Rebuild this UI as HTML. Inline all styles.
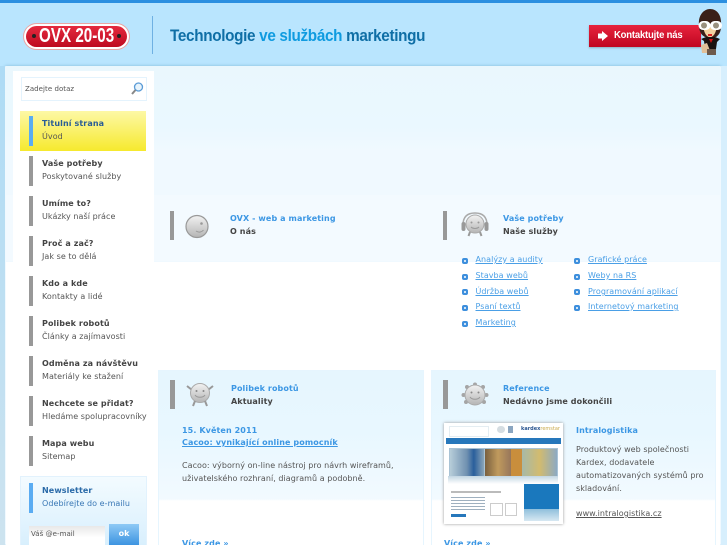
<!DOCTYPE html>
<html><head><meta charset="utf-8">
<style>
html,body{margin:0;padding:0}
body{width:727px;height:545px;overflow:hidden;position:relative;background:#b9e5fe;font-family:"DejaVu Sans",sans-serif;font-size:8px;color:#555}
div,a,span,svg{position:absolute;white-space:nowrap;display:block}
#w{left:0;top:0;width:727px;height:545px;overflow:hidden;filter:blur(.3px)}
.t{line-height:12px;letter-spacing:.05px;margin-top:1px}
.b{font-weight:bold;color:#444;letter-spacing:.1px}
.bl{color:#3c97e4}
a{color:#4a9fe6;text-decoration:underline}
.bar{width:4px;background:#989898}
.sq{width:6px;height:6px;background:#3d8fdd;border-radius:2px;margin-top:.5px}
.sq:after{content:"";position:absolute;left:2px;top:2px;width:2px;height:2px;background:#fff;border-radius:1px}
</style></head><body><div id="w">
<div style="left:0;top:0;width:727px;height:3px;background:#2b8fe0"></div>

<div style="left:24px;top:24px;width:105px;height:25px;border-radius:13px;background:#fff;box-shadow:0 0 0 1px #e9a5a5"></div>
<div style="left:26px;top:26px;width:101px;height:21px;border-radius:11px;background:linear-gradient(#e42a3e,#bd0a20)"></div>
<div style="left:32px;top:34px;width:4px;height:4px;border-radius:2px;background:#222"></div>
<div style="left:117px;top:34px;width:4px;height:4px;border-radius:2px;background:#222"></div>
<div style="left:39px;top:24px;font:bold 20px/25px 'Liberation Sans',sans-serif;color:#fff;transform:scaleX(.76);transform-origin:0 50%">OVX 20-03</div>
<div style="left:152px;top:16px;width:1px;height:38px;background:#6fb1e3"></div>
<div style="left:170px;top:25px;font:bold 16.6px/21px 'Liberation Sans',sans-serif;letter-spacing:-.35px;color:#0f6fa6;transform:scaleX(.92);transform-origin:0 50%">Technologie <span style="position:static;display:inline;color:#0f9be0">ve službách</span> marketingu</div>

<div style="left:589px;top:25px;width:112px;height:22px;background:linear-gradient(#e7233d,#bf0520);box-shadow:0 1px 2px rgba(0,0,0,.25)"></div>
<svg style="left:597px;top:30px" width="12" height="12" viewBox="0 0 12 12"><path d="M1 3.500H5V1L11 6L5 11V8.500H1Z" fill="#fff"/></svg>
<div style="left:613.500px;top:29px;font:bold 10px/13px 'Liberation Sans',sans-serif;color:#fff;letter-spacing:-.2px;transform:scaleX(.95);transform-origin:0 50%">Kontaktujte nás</div>
<svg style="left:695px;top:8px" width="30" height="48" viewBox="0 0 30 48">
<path d="M4 17C3 7 9 1 15 1C22 1 27 7 26 18C26 24 24 27 21 29H10C6 27 4 23 4 17Z" fill="#3a2018"/>
<path d="M8 18C10 33 20 33 22 18Z" fill="#f3d2a0"/>
<rect x="3.500" y="13" width="12" height="9" rx="4.500" fill="#fff"/><rect x="15" y="13" width="12" height="9" rx="4.500" fill="#fff"/>
<circle cx="9" cy="17.500" r="3" fill="#9a917f"/><circle cx="21" cy="17.500" r="3" fill="#9a917f"/>
<path d="M13 26h4v2h-4z" fill="#d22"/>
<path d="M9 33L6 31L11 29H20L25 31L22 34L21 41H10Z" fill="#1a1210"/>
<path d="M14 31h4l-2 4z" fill="#c11"/>
<path d="M6 37L12 35L16 45H7Z" fill="#e0c09a"/>
<path d="M12 41h9v6h-9z" fill="#6d5a4c"/>
</svg>

<div style="left:5px;top:66px;width:716px;height:479px;background:linear-gradient(#eaf7fd,#eaf8ff 60px,#f0f9ff 85px);box-shadow:0 0 3px #7fb9d8;border-radius:1px"></div>
<div style="left:6px;top:195px;width:714px;height:66px;background:#f3faff"></div>
<div style="left:6px;top:261px;width:714px;height:284px;background:#fff;border-top:1px solid #f0f9ff"></div>
<div style="left:0;top:66px;width:5px;height:479px;background:linear-gradient(#aedbf5,#cde3ef)"></div>
<div style="left:721px;top:66px;width:6px;height:479px;background:#d7effd"></div>

<div style="left:13px;top:71px;width:141px;height:474px;background:#fff"></div>

<div style="left:21px;top:77px;width:124px;height:22px;border:1.500px solid #e4f3fd;background:#fff"></div>
<div class="t" style="left:25px;top:82px;font-size:7px;color:#555">Zadejte dotaz</div>
<svg style="left:130px;top:81px" width="14" height="15" viewBox="0 0 14 15"><circle cx="8.500" cy="6" r="4" fill="#e8f4fc" stroke="#5a9bd6" stroke-width="1.300"/><path d="M5.500 9L2 13" stroke="#888" stroke-width="2"/></svg>

<div style="left:20px;top:111px;width:126px;height:40px;background:linear-gradient(#fdf8a6,#f6e92e)"></div>
<div class="bar" style="left:29px;top:116px;height:30px;background:#5aacf2"></div>
<div class="t b" style="left:42px;top:117px;color:#2a5d95">Titulní strana</div>
<div class="t" style="left:42px;top:130px">Úvod</div>

<div class="bar" style="left:29px;top:156px;height:30px"></div>
<div class="t b" style="left:42px;top:157px">Vaše potřeby</div>
<div class="t" style="left:42px;top:170px">Poskytované služby</div>
<div class="bar" style="left:29px;top:196px;height:30px"></div>
<div class="t b" style="left:42px;top:197px">Umíme to?</div>
<div class="t" style="left:42px;top:210px">Ukázky naší práce</div>
<div class="bar" style="left:29px;top:236px;height:30px"></div>
<div class="t b" style="left:42px;top:237px">Proč a zač?</div>
<div class="t" style="left:42px;top:250px">Jak se to dělá</div>
<div class="bar" style="left:29px;top:276px;height:30px"></div>
<div class="t b" style="left:42px;top:277px">Kdo a kde</div>
<div class="t" style="left:42px;top:290px">Kontakty a lidé</div>
<div class="bar" style="left:29px;top:316px;height:30px"></div>
<div class="t b" style="left:42px;top:317px">Polibek robotů</div>
<div class="t" style="left:42px;top:330px">Články a zajímavosti</div>
<div class="bar" style="left:29px;top:356px;height:30px"></div>
<div class="t b" style="left:42px;top:357px">Odměna za návštěvu</div>
<div class="t" style="left:42px;top:370px">Materiály ke stažení</div>
<div class="bar" style="left:29px;top:396px;height:30px"></div>
<div class="t b" style="left:42px;top:397px">Nechcete se přidat?</div>
<div class="t" style="left:42px;top:410px">Hledáme spolupracovníky</div>
<div class="bar" style="left:29px;top:436px;height:30px"></div>
<div class="t b" style="left:42px;top:437px">Mapa webu</div>
<div class="t" style="left:42px;top:450px">Sitemap</div>

<div style="left:21px;top:477px;width:125px;height:68px;background:linear-gradient(#f3fbff,#d8effd);box-shadow:0 0 0 1px #e2f2fd"></div>
<div class="bar" style="left:29px;top:483px;height:30px;background:#5aacf2"></div>
<div class="t b" style="left:42px;top:484px;color:#2a6aa8">Newsletter</div>
<div class="t" style="left:42px;top:497px;color:#3a78b5">Odebírejte do e-mailu</div>
<div style="left:29px;top:526px;width:76px;height:19px;background:linear-gradient(#e8e8e8,#fff 60%)"></div>
<div class="t" style="left:31px;top:527px;font-size:7px;color:#555">Váš @e-mail</div>
<div style="left:109px;top:524px;width:30px;height:21px;background:linear-gradient(#8fcaf5,#3d94e0);color:#fff;font-weight:bold;text-align:center;line-height:20px;font-size:8px">ok</div>

<div class="bar" style="left:170px;top:211px;height:29px"></div>
<svg style="left:184px;top:214px" width="26" height="26" viewBox="0 0 26 26"><defs><linearGradient id="g" x1="0" y1="0" x2="0" y2="1"><stop offset="0" stop-color="#f2f2f2"/><stop offset="1" stop-color="#b5b5b5"/></linearGradient></defs><circle cx="13" cy="12.500" r="11" fill="url(#g)" stroke="#999" stroke-width="1.200"/><circle cx="17.500" cy="9.500" r="1.300" fill="#999"/><path d="M12 17C15 19 18 18 19.500 16" fill="none" stroke="#999"/></svg>
<div class="t b bl" style="left:230px;top:212px">OVX - web a marketing</div>
<div class="t b" style="left:230px;top:225px">O nás</div>

<div class="bar" style="left:443px;top:211px;height:29px"></div>
<svg style="left:460px;top:211px" width="30" height="26" viewBox="0 0 30 26"><path d="M3 14C3 5 8 2 15 2C22 2 27 5 27 14" fill="none" stroke="#aaa" stroke-width="1.500"/><rect x="1.500" y="11" width="4" height="9" rx="2" fill="#999"/><rect x="24.500" y="11" width="4" height="9" rx="2" fill="#999"/><circle cx="15" cy="13" r="9" fill="url(#g)" stroke="#aaa"/><path d="M10 21L8.500 25M20 21L21.500 25" stroke="#999" stroke-width="2"/><circle cx="11.500" cy="11.500" r="1" fill="#999"/><circle cx="18.500" cy="11.500" r="1" fill="#999"/><path d="M11 16C13 18 17 18 19 16" fill="none" stroke="#999"/></svg>
<div class="t b bl" style="left:503px;top:212px">Vaše potřeby</div>
<div class="t b" style="left:503px;top:225px">Naše služby</div>

<div class="sq" style="left:462px;top:257px"></div><a class="t" style="left:475.500px;top:253px">Analýzy a audity</a>
<div class="sq" style="left:462px;top:273px"></div><a class="t" style="left:475.500px;top:269px">Stavba webů</a>
<div class="sq" style="left:462px;top:288px"></div><a class="t" style="left:475.500px;top:285px">Údržba webů</a>
<div class="sq" style="left:462px;top:304px"></div><a class="t" style="left:475.500px;top:300px">Psaní textů</a>
<div class="sq" style="left:462px;top:320px"></div><a class="t" style="left:475.500px;top:316px">Marketing</a>
<div class="sq" style="left:574px;top:257px"></div><a class="t" style="left:588px;top:253px">Grafické práce</a>
<div class="sq" style="left:574px;top:273px"></div><a class="t" style="left:588px;top:269px">Weby na RS</a>
<div class="sq" style="left:574px;top:288px"></div><a class="t" style="left:588px;top:285px">Programování aplikací</a>
<div class="sq" style="left:574px;top:304px"></div><a class="t" style="left:588px;top:300px">Internetový marketing</a>

<div style="left:159px;top:371px;width:264px;height:174px;background:linear-gradient(#e6f6fe,#e8f7ff 60px,#f2faff 128px,#fff 130px);box-shadow:0 0 0 1px #e6f5fe"></div>
<div class="bar" style="left:170px;top:380px;width:5px;height:29px"></div>
<svg style="left:185px;top:382px" width="30" height="26" viewBox="0 0 30 26"><path d="M7 8L2 4M23 8L28 4" stroke="#999" stroke-width="2"/><circle cx="15" cy="11" r="9.500" fill="url(#g)" stroke="#aaa"/><path d="M10 19L8 24M20 19L22 24" stroke="#999" stroke-width="2"/><circle cx="11.500" cy="9" r="1" fill="#888"/><circle cx="18.500" cy="9" r="1" fill="#888"/><path d="M10 13C12 16 18 16 20 13" fill="none" stroke="#999"/></svg>
<div class="t b bl" style="left:231px;top:382px">Polibek robotů</div>
<div class="t b" style="left:231px;top:395px">Aktuality</div>
<div class="t b bl" style="left:182px;top:424px">15. Květen 2011</div>
<a class="t b" style="left:182px;top:436px;color:#3c97e4">Cacoo: vynikající online pomocník</a>
<div class="t" style="left:182px;top:459px;width:230px">Cacoo: výborný on-line nástroj pro návrh wireframů,</div>
<div class="t" style="left:182px;top:472px;width:230px">uživatelského rozhraní, diagramů a podobně.</div>
<div class="t b bl" style="left:182px;top:537px">Více zde »</div>

<div style="left:432px;top:371px;width:283px;height:174px;background:linear-gradient(#e6f6fe,#e8f7ff 60px,#f2faff 128px,#fff 130px);box-shadow:0 0 0 1px #e6f5fe"></div>
<div class="bar" style="left:443px;top:380px;width:5px;height:29px"></div>
<svg style="left:461px;top:382px" width="28" height="26" viewBox="0 0 28 26"><g fill="#a5a5a5"><circle cx="14" cy="2.500" r="2"/><circle cx="6" cy="5" r="2"/><circle cx="22" cy="5" r="2"/><circle cx="2.500" cy="13" r="2"/><circle cx="25.500" cy="13" r="2"/><circle cx="5" cy="20" r="2"/><circle cx="23" cy="20" r="2"/></g><circle cx="14" cy="13" r="10" fill="url(#g)" stroke="#aaa"/><circle cx="10.500" cy="10.500" r="1" fill="#888"/><circle cx="17.500" cy="10.500" r="1" fill="#888"/><path d="M9 15C11 18 17 18 19 15" fill="none" stroke="#999"/></svg>
<div class="t b bl" style="left:503px;top:382px">Reference</div>
<div class="t b" style="left:503px;top:395px">Nedávno jsme dokončili</div>

<div style="left:444px;top:423px;width:119px;height:101px;background:#fff;box-shadow:0 0 3px #999"></div>
<div style="left:449px;top:426px;width:38px;height:9px;border:1px solid #e4edf2"></div>
<div style="left:497px;top:426px;width:8px;height:7px;border-radius:4px;background:#d5dde2"></div>
<div style="left:508px;top:426px;width:5px;height:7px;background:#8aa5c0"></div>
<div style="left:521px;top:425px;font-size:5px;line-height:9px;font-weight:bold;color:#2a5590">kardex<span style="position:static;display:inline;color:#c9a94a;font-weight:normal">remstar</span></div>
<div style="left:446px;top:438px;width:115px;height:6px;background:#2677bb"></div>
<div style="left:449px;top:448px;width:109px;height:28px;background:#a9c3d5"></div>
<div style="left:450px;top:449px;width:34px;height:27px;background:linear-gradient(90deg,#b7cdd9,#6f90b0 50%,#2a5f9c 70%,#8ba5b8)"></div>
<div style="left:485px;top:449px;width:26px;height:27px;background:linear-gradient(90deg,#79603f,#c09a5d,#97765b)"></div>
<div style="left:522px;top:449px;width:35px;height:27px;background:linear-gradient(90deg,#a6b9a8,#d2bb6f,#8daac2)"></div>
<div style="left:511px;top:449px;width:11px;height:27px;background:#c98e3c"></div>
<div style="left:448px;top:476px;width:110px;height:8px;background:linear-gradient(#c2d6e2,#fff)"></div>
<div style="left:524px;top:484px;width:35px;height:25px;background:#1a78bd"></div>
<div style="left:524px;top:509px;width:35px;height:12px;background:linear-gradient(#8fbfdc,#d7e8f2)"></div>
<div style="left:451px;top:491px;width:50px;height:2px;background:#bbb"></div>
<div style="left:451px;top:497px;width:34px;height:14px;background:repeating-linear-gradient(#9fb0bf 0 1px,#fff 1px 3px)"></div>
<div style="left:490px;top:503px;width:11px;height:11px;border:1px solid #ccc"></div>
<div style="left:505px;top:503px;width:10px;height:11px;border:1px solid #ccc"></div>
<div style="left:451px;top:514px;width:15px;height:3px;background:#2677bb"></div>

<div class="t b bl" style="left:576px;top:424px">Intralogistika</div>
<div class="t" style="left:576px;top:443px">Produktový web společnosti</div>
<div class="t" style="left:576px;top:456px">Kardex, dodavatele</div>
<div class="t" style="left:576px;top:469px">automatizovaných systémů pro</div>
<div class="t" style="left:576px;top:482px">skladování.</div>
<a class="t" style="left:576px;top:507px;color:#555">www.intralogistika.cz</a>
<div class="t b bl" style="left:444px;top:537px">Více zde »</div>
</div></body></html>
